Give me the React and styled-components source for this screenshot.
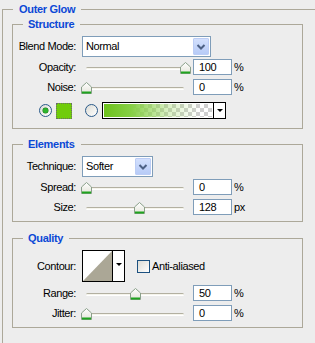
import React from 'react';
import styled, { createGlobalStyle } from 'styled-components';

const GlobalStyle = createGlobalStyle`
  html, body {
    margin: 0;
    background: #ededed;
    overflow: hidden;
  }
  body {
    font-family: "Liberation Sans", Arial, sans-serif;
    font-size: 11px;
    color: #000;
    letter-spacing: -0.4px;
  }
`;

const Page = styled.div`
  width: 315px;
  height: 343px;
  overflow: hidden;
`;

const Outer = styled.fieldset`
  box-sizing: border-box;
  width: 330px;
  min-width: 0;
  margin: 1px 0 0 2px;
  padding: 0 28px 20px 9px;
  border: 1px solid #aca899;
`;

const Group = styled.fieldset`
  min-width: 0;
  margin: ${p => p.$top}px 0 0 0;
  padding: 4px 0 4px 4px;
  border: 1px solid #aca899;
`;

const Legend = styled.legend`
  margin-left: ${p => (p.$outer ? 1 : 6)}px;
  padding: 0 6px 0 ${p => (p.$outer ? 6 : 5)}px;
  font-size: 11px;
  font-weight: bold;
  line-height: ${p => (p.$outer ? 16 : 14)}px;
  letter-spacing: -0.3px;
  color: #0b48d6;
`;

const Row = styled.div`
  display: flex;
  align-items: center;
  height: ${p => p.$h || 20}px;
`;

const Label = styled.span`
  flex: none;
  width: 59px;
  margin-right: 6px;
  text-align: right;
  white-space: nowrap;
`;

const Select = styled.div`
  box-sizing: border-box;
  display: flex;
  width: ${p => p.$w}px;
  height: 21px;
  padding: 1px;
  border: 1px solid #7f9db9;
  background: #fff;
`;

const SelectText = styled.span`
  flex: 1;
  display: flex;
  align-items: center;
  padding-left: 2px;
`;

const SelectButton = styled.span`
  box-sizing: border-box;
  display: flex;
  align-items: center;
  justify-content: center;
  width: 16px;
  border: 1px solid #bccdf5;
  border-radius: 1px;
  background: linear-gradient(#d3e0fd, #b7cbf7);
`;

const SliderBox = styled.div`
  position: relative;
  flex: none;
  box-sizing: border-box;
  display: flex;
  align-items: center;
  width: 108px;
  height: 12px;
  padding: 0 6px 0 4px;
`;

const Track = styled.div`
  flex: 1;
  height: 1px;
  margin-top: 3px;
  border-top: 1px solid #b3b0a1;
  border-bottom: 1px solid #fff;
  border-radius: 2px;
  background: #f5f4ec;
`;

const Thumb = styled.svg`
  position: absolute;
  top: 1px;
`;

const NumBox = styled.div`
  box-sizing: border-box;
  flex: none;
  width: 39px;
  height: 16px;
  margin-left: 3px;
  padding-left: 5px;
  border: 1px solid #7f9db9;
  background: #fff;
  line-height: 14px;
`;

const Unit = styled.span`
  margin-left: 2px;
`;

const Radio = styled.span`
  position: relative;
  flex: none;
  box-sizing: border-box;
  width: 13px;
  height: 13px;
  margin-left: ${p => p.$ml}px;
  border: 1px solid #2a5a8a;
  border-radius: 50%;
  background: linear-gradient(135deg, #dcdcd5, #fff);

  &::after {
    content: '';
    display: ${p => (p.$checked ? 'block' : 'none')};
    position: absolute;
    left: 3px;
    top: 3px;
    width: 5px;
    height: 5px;
    border-radius: 50%;
    background: #2eb52e;
    box-shadow: 0 0 0 0.5px #1b7a1b;
  }
`;

const Swatch = styled.span`
  flex: none;
  box-sizing: border-box;
  width: 16px;
  height: 16px;
  margin-left: 4px;
  border: 1px dotted #6b6b6b;
  background: #70cc0a;
`;

const GradientBox = styled.div`
  flex: none;
  box-sizing: border-box;
  display: flex;
  width: 124px;
  height: 17px;
  margin-left: 4px;
  border: 1px solid #000;
  background: #fff;
`;

const GradientFill = styled.div`
  flex: 1;
  margin: 1px;
  background:
    linear-gradient(to right, #6dc21c 0%, #86cf45 25%, rgba(150, 215, 90, 0.35) 60%, rgba(150, 215, 90, 0) 88%),
    repeating-conic-gradient(#cfcfcf 0 25%, #fff 0 50%) 0 0 / 8px 8px;
`;

const DropPart = styled.div`
  display: flex;
  align-items: ${p => (p.$top ? 'flex-start' : 'center')};
  justify-content: center;
  width: ${p => p.$w}px;
  padding-top: ${p => p.$top || 0}px;
  box-sizing: border-box;
  border-left: 1px solid #000;
  background: #fff;
`;

const Caret = styled.span`
  width: 0;
  height: 0;
  border-left: 3px solid transparent;
  border-right: 3px solid transparent;
  border-top: 3px solid #000;
`;

const ContourBox = styled.div`
  flex: none;
  box-sizing: border-box;
  display: flex;
  width: 43px;
  height: 32px;
  border: 1px solid #000;
  background: #fff;
`;

const Check = styled.span`
  flex: none;
  box-sizing: border-box;
  width: 13px;
  height: 13px;
  margin-left: 12px;
  border: 1px solid #1c5180;
  background: linear-gradient(135deg, #dcdcd5, #fff);
`;

const CheckText = styled.span`
  margin-left: 2px;
`;

const Chevron = () => (
  <svg width="14" height="15" viewBox="0 0 14 15">
    <path d="M3.5 6 L7 9.5 L10.5 6" fill="none" stroke="#4d6185" strokeWidth="2" />
  </svg>
);

const DropSelect = ({ w, value }) => (
  <Select $w={w}>
    <SelectText>{value}</SelectText>
    <SelectButton>
      <Chevron />
    </SelectButton>
  </Select>
);

const Slider = ({ pos }) => (
  <SliderBox>
    <Track />
    <Thumb width="11" height="12" viewBox="0 0 11 12" style={{ left: -1 + pos * 98.5 }}>
      <defs>
        <linearGradient id="thumbFill" x1="0" y1="0" x2="0" y2="1">
          <stop offset="0" stopColor="#ffffff" />
          <stop offset="1" stopColor="#e4e4da" />
        </linearGradient>
      </defs>
      <path d="M0.5 5 L5.5 0.5 L10.5 5 V11.5 H0.5 Z" fill="url(#thumbFill)" stroke="#8aa08a" />
      <rect x="1" y="9.5" width="9" height="2" fill="#1fa31f" />
    </Thumb>
  </SliderBox>
);

const SliderRow = ({ label, pos, value, unit = '%' }) => (
  <Row>
    <Label>{label}</Label>
    <Slider pos={pos} />
    <NumBox>{value}</NumBox>
    <Unit>{unit}</Unit>
  </Row>
);

export default function App() {
  return (
    <Page>
      <GlobalStyle />
      <Outer>
        <Legend $outer>Outer Glow</Legend>

        <Group $top={0}>
          <Legend>Structure</Legend>
          <Row $h={22}>
            <Label>Blend Mode:</Label>
            <DropSelect w={129} value="Normal" />
          </Row>
          <SliderRow label="Opacity:" pos={1} value="100" />
          <SliderRow label="Noise:" pos={0} value="0" />
          <Row $h={27}>
            <Radio $ml={22} $checked />
            <Swatch />
            <Radio $ml={13} />
            <GradientBox>
              <GradientFill />
              <DropPart $w={12}>
                <Caret />
              </DropPart>
            </GradientBox>
          </Row>
        </Group>

        <Group $top={8}>
          <Legend>Elements</Legend>
          <Row $h={22}>
            <Label>Technique:</Label>
            <DropSelect w={71} value="Softer" />
          </Row>
          <SliderRow label="Spread:" pos={0} value="0" />
          <SliderRow label="Size:" pos={0.54} value="128" unit="px" />
        </Group>

        <Group $top={9}>
          <Legend>Quality</Legend>
          <Row $h={34}>
            <Label>Contour:</Label>
            <ContourBox>
              <svg width="29" height="30" viewBox="0 0 29 30">
                <polygon points="0,30 29,0 29,30" fill="#aba796" />
              </svg>
              <DropPart $w={12} $top={12}>
                <Caret />
              </DropPart>
            </ContourBox>
            <Check />
            <CheckText>Anti-aliased</CheckText>
          </Row>
          <SliderRow label="Range:" pos={0.5} value="50" />
          <SliderRow label="Jitter:" pos={0} value="0" />
        </Group>
      </Outer>
    </Page>
  );
}
